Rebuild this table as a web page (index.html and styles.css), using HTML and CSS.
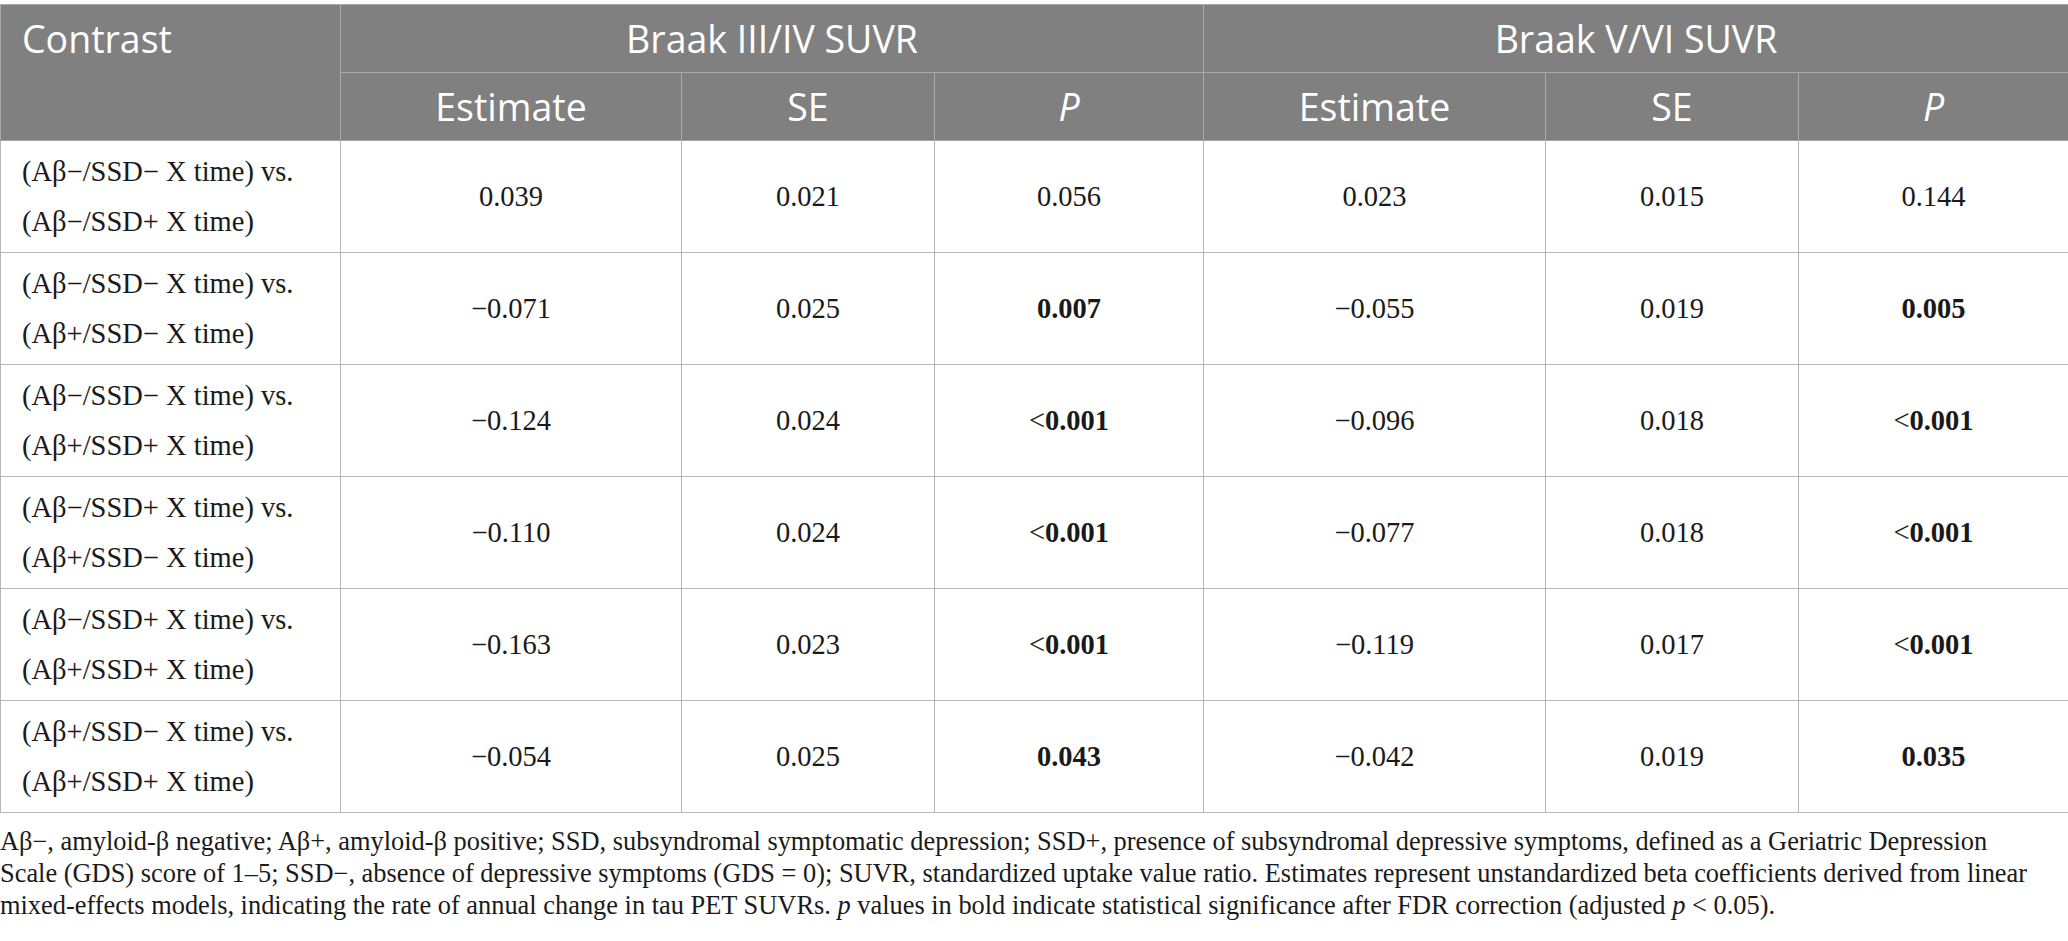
FILE: index.html
```html
<!DOCTYPE html>
<html lang="en">
<head>
<meta charset="utf-8">
<title>Table</title>
<link rel="stylesheet" href="styles.css">
</head>
<body>
<div class="page">
<table class="data">
<colgroup>
<col class="c-contrast"><col class="c-est"><col class="c-se"><col class="c-p"><col class="c-est2"><col class="c-se"><col class="c-p2">
</colgroup>
<thead>
<tr class="h1">
<th rowspan="2" class="th-contrast">Contrast</th>
<th colspan="3">Braak III/IV SUVR</th>
<th colspan="3">Braak V/VI SUVR</th>
</tr>
<tr class="h2">
<th>Estimate</th><th>SE</th><th><i>P</i></th>
<th>Estimate</th><th>SE</th><th><i>P</i></th>
</tr>
</thead>
<tbody>
<tr>
<td class="lbl">(Aβ−/SSD− X time) vs.<br>(Aβ−/SSD+ X time)</td>
<td>0.039</td><td>0.021</td><td>0.056</td><td>0.023</td><td>0.015</td><td>0.144</td>
</tr>
<tr>
<td class="lbl">(Aβ−/SSD− X time) vs.<br>(Aβ+/SSD− X time)</td>
<td>−0.071</td><td>0.025</td><td><b>0.007</b></td><td>−0.055</td><td>0.019</td><td><b>0.005</b></td>
</tr>
<tr>
<td class="lbl">(Aβ−/SSD− X time) vs.<br>(Aβ+/SSD+ X time)</td>
<td>−0.124</td><td>0.024</td><td>&lt;<b>0.001</b></td><td>−0.096</td><td>0.018</td><td>&lt;<b>0.001</b></td>
</tr>
<tr>
<td class="lbl">(Aβ−/SSD+ X time) vs.<br>(Aβ+/SSD− X time)</td>
<td>−0.110</td><td>0.024</td><td>&lt;<b>0.001</b></td><td>−0.077</td><td>0.018</td><td>&lt;<b>0.001</b></td>
</tr>
<tr>
<td class="lbl">(Aβ−/SSD+ X time) vs.<br>(Aβ+/SSD+ X time)</td>
<td>−0.163</td><td>0.023</td><td>&lt;<b>0.001</b></td><td>−0.119</td><td>0.017</td><td>&lt;<b>0.001</b></td>
</tr>
<tr>
<td class="lbl">(Aβ+/SSD− X time) vs.<br>(Aβ+/SSD+ X time)</td>
<td>−0.054</td><td>0.025</td><td><b>0.043</b></td><td>−0.042</td><td>0.019</td><td><b>0.035</b></td>
</tr>
</tbody>
</table>
<p class="note">Aβ−, amyloid-β negative; Aβ+, amyloid-β positive; SSD, subsyndromal symptomatic depression; SSD+, presence of subsyndromal depressive symptoms, defined as a Geriatric Depression<br>Scale (GDS) score of 1–5; SSD−, absence of depressive symptoms (GDS = 0); SUVR, standardized uptake value ratio. Estimates represent unstandardized beta coefficients derived from linear<br>mixed-effects models, indicating the rate of annual change in tau PET SUVRs. <i>p</i> values in bold indicate statistical significance after FDR correction (adjusted <i>p</i> &lt; 0.05).</p>
</div>
</body>
</html>
```

FILE: styles.css
```css
html, body {
  margin: 0;
  padding: 0;
  background: #ffffff;
}

.page {
  padding-top: 4px;
  width: 2068px;
}

.data {
  width: 2068px;
  border-collapse: collapse;
  table-layout: fixed;
  font-family: "Liberation Serif", "Times New Roman", serif;
  font-size: 28.5px;
  color: #1a1a1a;
}

.c-contrast { width: 340px; }
.c-est { width: 341px; }
.c-se { width: 253px; }
.c-p { width: 269px; }
.c-est2 { width: 342px; }
.c-p2 { width: 270px; }

.data th {
  background: #808080;
  color: #ffffff;
  font-family: "Open Sans", "Noto Sans", sans-serif;
  font-weight: 400;
  font-size: 37.5px;
  border: 1px solid #a9a9a9;
  text-align: center;
  padding: 0;
  line-height: 48px;
}

.data .h1 th { height: 67px; }
.data .h2 th { height: 67px; }

.data th.th-contrast {
  text-align: left;
  vertical-align: top;
  padding: 10px 0 0 21px;
}

.data td {
  border: 1px solid #b5b5b5;
  text-align: center;
  vertical-align: middle;
  height: 111px;
  padding: 0;
  line-height: 50px;
}

.data td.lbl {
  text-align: left;
  padding-left: 21px;
}

.data td b {
  font-weight: 700;
}

.note {
  margin: 12px 0 0 0;
  font-family: "Liberation Serif", "Times New Roman", serif;
  font-size: 26.4px;
  line-height: 32px;
  color: #1a1a1a;
  white-space: nowrap;
}
```
